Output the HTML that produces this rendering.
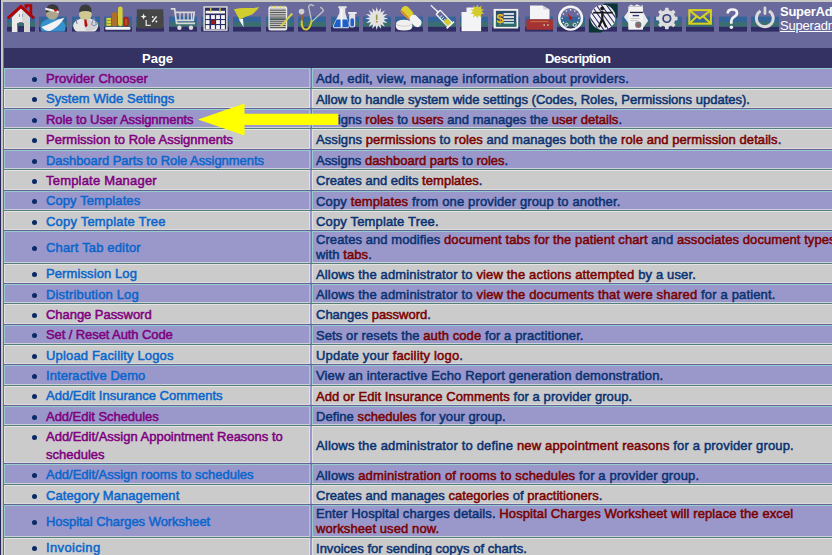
<!DOCTYPE html><html><head><meta charset="utf-8"><style>
*{margin:0;padding:0}
html,body{width:832px;height:555px;overflow:hidden}
body{position:relative;background:#6a699b;font-family:"Liberation Sans",sans-serif;font-size:13px}
.a{position:absolute}
.row{position:absolute;left:4px;width:840px}
.t1{position:absolute;left:46px;white-space:nowrap;line-height:18px;-webkit-text-stroke:0.5px currentColor}
.t2{position:absolute;left:316px;white-space:nowrap;line-height:15px;color:#0a3272;-webkit-text-stroke:0.5px currentColor}
.r{color:#7a0000}
.bul{position:absolute;left:32px;width:5px;height:5px;border-radius:50%;background:#0a2a66}
.tile{position:absolute;top:17px;width:28px;height:15px;background:linear-gradient(#33659b 0,#33659b 5px,#3b6e6f 5px,#3b6e6f 10px,#302d65 10px)}
</style></head><body><div class="a" style="left:0;top:0;width:1px;height:555px;background:#25245a"></div>
<div class="a" style="left:1px;top:0;width:2px;height:555px;background:#c9c9c4"></div>
<div class="a" style="left:1px;top:0;width:831px;height:2px;background:#c9c9c4"></div>
<div class="a" style="left:4px;top:48px;width:828px;height:20px;background:#343163"></div>
<div class="a" style="left:142px;top:51px;color:#fff;font-weight:bold;line-height:15px">Page</div>
<div class="a" style="left:545px;top:51px;color:#fff;font-weight:bold;line-height:15px;letter-spacing:-0.55px">Description</div>
<div class="a" style="left:4px;top:68px;width:828px;height:20px;background:#9a98cb"></div>
<div class="a" style="left:4px;top:68px;width:828px;height:1px;background:#95cccc"></div>
<div class="a" style="left:4px;top:87px;width:828px;height:1px;background:#cfcfd8"></div>
<div class="a" style="left:4px;top:69px;width:1px;height:18px;background:#95cccc"></div>
<div class="a" style="left:309px;top:69px;width:1px;height:18px;background:#95cccc"></div>
<div class="a" style="left:310px;top:68px;width:2px;height:20px;background:#9a98cb"></div>
<div class="a" style="left:311px;top:68px;width:1px;height:20px;background:#5b8a8a"></div>
<div class="a" style="left:312px;top:69px;width:1px;height:18px;background:#95cccc"></div>
<div class="a" style="left:4px;top:88px;width:828px;height:1px;background:#52807f"></div>
<div class="bul" style="top:77.0px"></div>
<div class="t1" style="top:70.0px;color:#800080"><span class="ln" style="letter-spacing:0.040px">Provider Chooser</span></div>
<div class="t2" style="top:71.3px"><span class="ln" style="letter-spacing:0.196px">Add, edit, view, manage information about providers.</span></div>
<div class="a" style="left:4px;top:89px;width:828px;height:19px;background:#cbcbcb"></div>
<div class="a" style="left:4px;top:89px;width:828px;height:1px;background:#e4e4e4"></div>
<div class="a" style="left:4px;top:107px;width:828px;height:1px;background:#dcdcdc"></div>
<div class="a" style="left:4px;top:90px;width:1px;height:17px;background:#e2e2e2"></div>
<div class="a" style="left:309px;top:90px;width:1px;height:17px;background:#e2e2e2"></div>
<div class="a" style="left:310px;top:89px;width:2px;height:19px;background:#9a98cb"></div>
<div class="a" style="left:312px;top:90px;width:1px;height:17px;background:#e2e2e2"></div>
<div class="a" style="left:4px;top:108px;width:828px;height:1px;background:#63639a"></div>
<div class="bul" style="top:97.4px"></div>
<div class="t1" style="top:90.4px;color:#0a66cc"><span class="ln" style="letter-spacing:0.063px">System Wide Settings</span></div>
<div class="t2" style="top:91.7px"><span class="ln" style="letter-spacing:0.006px">Allow to handle system wide settings (Codes, Roles, Permissions updates).</span></div>
<div class="a" style="left:4px;top:109px;width:828px;height:19px;background:#9a98cb"></div>
<div class="a" style="left:4px;top:109px;width:828px;height:1px;background:#95cccc"></div>
<div class="a" style="left:4px;top:127px;width:828px;height:1px;background:#cfcfd8"></div>
<div class="a" style="left:4px;top:110px;width:1px;height:17px;background:#95cccc"></div>
<div class="a" style="left:309px;top:110px;width:1px;height:17px;background:#95cccc"></div>
<div class="a" style="left:310px;top:109px;width:2px;height:19px;background:#9a98cb"></div>
<div class="a" style="left:311px;top:109px;width:1px;height:19px;background:#5b8a8a"></div>
<div class="a" style="left:312px;top:110px;width:1px;height:17px;background:#95cccc"></div>
<div class="a" style="left:4px;top:128px;width:828px;height:1px;background:#52807f"></div>
<div class="bul" style="top:117.8px"></div>
<div class="t1" style="top:110.8px;color:#800080"><span class="ln" style="letter-spacing:-0.087px">Role to User Assignments</span></div>
<div class="t2" style="top:112.1px"><span class="ln" style="letter-spacing:0.020px">Assigns <span class="r">roles</span> to <span class="r">users</span> and manages the <span class="r">user details</span>.</span></div>
<div class="a" style="left:4px;top:129px;width:828px;height:20px;background:#cbcbcb"></div>
<div class="a" style="left:4px;top:129px;width:828px;height:1px;background:#e4e4e4"></div>
<div class="a" style="left:4px;top:148px;width:828px;height:1px;background:#dcdcdc"></div>
<div class="a" style="left:4px;top:130px;width:1px;height:18px;background:#e2e2e2"></div>
<div class="a" style="left:309px;top:130px;width:1px;height:18px;background:#e2e2e2"></div>
<div class="a" style="left:310px;top:129px;width:2px;height:20px;background:#9a98cb"></div>
<div class="a" style="left:312px;top:130px;width:1px;height:18px;background:#e2e2e2"></div>
<div class="a" style="left:4px;top:149px;width:828px;height:1px;background:#63639a"></div>
<div class="bul" style="top:138.1px"></div>
<div class="t1" style="top:131.1px;color:#800080"><span class="ln" style="letter-spacing:0.024px">Permission to Role Assignments</span></div>
<div class="t2" style="top:132.4px"><span class="ln" style="letter-spacing:0.073px">Assigns <span class="r">permissions</span> to <span class="r">roles</span> and manages both the <span class="r">role and permission details</span>.</span></div>
<div class="a" style="left:4px;top:150px;width:828px;height:19px;background:#9a98cb"></div>
<div class="a" style="left:4px;top:150px;width:828px;height:1px;background:#95cccc"></div>
<div class="a" style="left:4px;top:168px;width:828px;height:1px;background:#cfcfd8"></div>
<div class="a" style="left:4px;top:151px;width:1px;height:17px;background:#95cccc"></div>
<div class="a" style="left:309px;top:151px;width:1px;height:17px;background:#95cccc"></div>
<div class="a" style="left:310px;top:150px;width:2px;height:19px;background:#9a98cb"></div>
<div class="a" style="left:311px;top:150px;width:1px;height:19px;background:#5b8a8a"></div>
<div class="a" style="left:312px;top:151px;width:1px;height:17px;background:#95cccc"></div>
<div class="a" style="left:4px;top:169px;width:828px;height:1px;background:#52807f"></div>
<div class="bul" style="top:158.5px"></div>
<div class="t1" style="top:151.5px;color:#0a66cc"><span class="ln" style="letter-spacing:-0.050px">Dashboard Parts to Role Assignments</span></div>
<div class="t2" style="top:152.8px"><span class="ln" style="letter-spacing:-0.025px">Assigns <span class="r">dashboard parts</span> to <span class="r">roles</span>.</span></div>
<div class="a" style="left:4px;top:170px;width:828px;height:20px;background:#cbcbcb"></div>
<div class="a" style="left:4px;top:170px;width:828px;height:1px;background:#e4e4e4"></div>
<div class="a" style="left:4px;top:189px;width:828px;height:1px;background:#dcdcdc"></div>
<div class="a" style="left:4px;top:171px;width:1px;height:18px;background:#e2e2e2"></div>
<div class="a" style="left:309px;top:171px;width:1px;height:18px;background:#e2e2e2"></div>
<div class="a" style="left:310px;top:170px;width:2px;height:20px;background:#9a98cb"></div>
<div class="a" style="left:312px;top:171px;width:1px;height:18px;background:#e2e2e2"></div>
<div class="a" style="left:4px;top:190px;width:828px;height:1px;background:#63639a"></div>
<div class="bul" style="top:178.8px"></div>
<div class="t1" style="top:171.8px;color:#800080"><span class="ln" style="letter-spacing:0.200px">Template Manager</span></div>
<div class="t2" style="top:173.1px"><span class="ln" style="letter-spacing:0.033px">Creates and edits <span class="r">templates</span>.</span></div>
<div class="a" style="left:4px;top:191px;width:828px;height:19px;background:#9a98cb"></div>
<div class="a" style="left:4px;top:191px;width:828px;height:1px;background:#95cccc"></div>
<div class="a" style="left:4px;top:209px;width:828px;height:1px;background:#cfcfd8"></div>
<div class="a" style="left:4px;top:192px;width:1px;height:17px;background:#95cccc"></div>
<div class="a" style="left:309px;top:192px;width:1px;height:17px;background:#95cccc"></div>
<div class="a" style="left:310px;top:191px;width:2px;height:19px;background:#9a98cb"></div>
<div class="a" style="left:311px;top:191px;width:1px;height:19px;background:#5b8a8a"></div>
<div class="a" style="left:312px;top:192px;width:1px;height:17px;background:#95cccc"></div>
<div class="a" style="left:4px;top:210px;width:828px;height:1px;background:#52807f"></div>
<div class="bul" style="top:199.2px"></div>
<div class="t1" style="top:192.2px;color:#0a66cc"><span class="ln" style="letter-spacing:0.092px">Copy Templates</span></div>
<div class="t2" style="top:193.5px"><span class="ln" style="letter-spacing:0.135px">Copy <span class="r">templates</span> from one provider group to another.</span></div>
<div class="a" style="left:4px;top:211px;width:828px;height:19px;background:#cbcbcb"></div>
<div class="a" style="left:4px;top:211px;width:828px;height:1px;background:#e4e4e4"></div>
<div class="a" style="left:4px;top:229px;width:828px;height:1px;background:#dcdcdc"></div>
<div class="a" style="left:4px;top:212px;width:1px;height:17px;background:#e2e2e2"></div>
<div class="a" style="left:309px;top:212px;width:1px;height:17px;background:#e2e2e2"></div>
<div class="a" style="left:310px;top:211px;width:2px;height:19px;background:#9a98cb"></div>
<div class="a" style="left:312px;top:212px;width:1px;height:17px;background:#e2e2e2"></div>
<div class="a" style="left:4px;top:230px;width:828px;height:1px;background:#63639a"></div>
<div class="bul" style="top:219.6px"></div>
<div class="t1" style="top:212.6px;color:#0a66cc"><span class="ln" style="letter-spacing:0.194px">Copy Template Tree</span></div>
<div class="t2" style="top:213.9px"><span class="ln" style="letter-spacing:0.156px">Copy Template Tree.</span></div>
<div class="a" style="left:4px;top:231px;width:828px;height:32px;background:#9a98cb"></div>
<div class="a" style="left:4px;top:231px;width:828px;height:1px;background:#95cccc"></div>
<div class="a" style="left:4px;top:262px;width:828px;height:1px;background:#cfcfd8"></div>
<div class="a" style="left:4px;top:232px;width:1px;height:30px;background:#95cccc"></div>
<div class="a" style="left:309px;top:232px;width:1px;height:30px;background:#95cccc"></div>
<div class="a" style="left:310px;top:231px;width:2px;height:32px;background:#9a98cb"></div>
<div class="a" style="left:311px;top:231px;width:1px;height:32px;background:#5b8a8a"></div>
<div class="a" style="left:312px;top:232px;width:1px;height:30px;background:#95cccc"></div>
<div class="a" style="left:4px;top:263px;width:828px;height:1px;background:#52807f"></div>
<div class="bul" style="top:245.9px"></div>
<div class="t1" style="top:238.9px;color:#0a66cc"><span class="ln" style="letter-spacing:0.160px">Chart Tab editor</span></div>
<div class="t2" style="top:232.2px"><span class="ln" style="letter-spacing:0.076px">Creates and modifies <span class="r">document tabs for the patient chart</span> and <span class="r">associates document types</span></span><br><span class="ln" style="letter-spacing:0.100px">with <span class="r">tabs</span>.</span></div>
<div class="a" style="left:4px;top:264px;width:828px;height:19px;background:#cbcbcb"></div>
<div class="a" style="left:4px;top:264px;width:828px;height:1px;background:#e4e4e4"></div>
<div class="a" style="left:4px;top:282px;width:828px;height:1px;background:#dcdcdc"></div>
<div class="a" style="left:4px;top:265px;width:1px;height:17px;background:#e2e2e2"></div>
<div class="a" style="left:309px;top:265px;width:1px;height:17px;background:#e2e2e2"></div>
<div class="a" style="left:310px;top:264px;width:2px;height:19px;background:#9a98cb"></div>
<div class="a" style="left:312px;top:265px;width:1px;height:17px;background:#e2e2e2"></div>
<div class="a" style="left:4px;top:283px;width:828px;height:1px;background:#63639a"></div>
<div class="bul" style="top:272.3px"></div>
<div class="t1" style="top:265.3px;color:#0a66cc"><span class="ln" style="letter-spacing:0.100px">Permission Log</span></div>
<div class="t2" style="top:266.6px"><span class="ln" style="letter-spacing:0.155px">Allows the administrator to <span class="r">view the actions attempted</span> by a user.</span></div>
<div class="a" style="left:4px;top:284px;width:828px;height:19px;background:#9a98cb"></div>
<div class="a" style="left:4px;top:284px;width:828px;height:1px;background:#95cccc"></div>
<div class="a" style="left:4px;top:302px;width:828px;height:1px;background:#cfcfd8"></div>
<div class="a" style="left:4px;top:285px;width:1px;height:17px;background:#95cccc"></div>
<div class="a" style="left:309px;top:285px;width:1px;height:17px;background:#95cccc"></div>
<div class="a" style="left:310px;top:284px;width:2px;height:19px;background:#9a98cb"></div>
<div class="a" style="left:311px;top:284px;width:1px;height:19px;background:#5b8a8a"></div>
<div class="a" style="left:312px;top:285px;width:1px;height:17px;background:#95cccc"></div>
<div class="a" style="left:4px;top:303px;width:828px;height:1px;background:#52807f"></div>
<div class="bul" style="top:292.6px"></div>
<div class="t1" style="top:285.6px;color:#0a66cc"><span class="ln" style="letter-spacing:0.160px">Distribution Log</span></div>
<div class="t2" style="top:286.9px"><span class="ln" style="letter-spacing:0.157px">Allows the administrator to <span class="r">view the documents that were shared</span> for a patient.</span></div>
<div class="a" style="left:4px;top:304px;width:828px;height:20px;background:#cbcbcb"></div>
<div class="a" style="left:4px;top:304px;width:828px;height:1px;background:#e4e4e4"></div>
<div class="a" style="left:4px;top:323px;width:828px;height:1px;background:#dcdcdc"></div>
<div class="a" style="left:4px;top:305px;width:1px;height:18px;background:#e2e2e2"></div>
<div class="a" style="left:309px;top:305px;width:1px;height:18px;background:#e2e2e2"></div>
<div class="a" style="left:310px;top:304px;width:2px;height:20px;background:#9a98cb"></div>
<div class="a" style="left:312px;top:305px;width:1px;height:18px;background:#e2e2e2"></div>
<div class="a" style="left:4px;top:324px;width:828px;height:1px;background:#63639a"></div>
<div class="bul" style="top:313.0px"></div>
<div class="t1" style="top:306.0px;color:#800080"><span class="ln" style="letter-spacing:-0.043px">Change Password</span></div>
<div class="t2" style="top:307.3px"><span class="ln" style="letter-spacing:0.000px">Changes <span class="r">password</span>.</span></div>
<div class="a" style="left:4px;top:325px;width:828px;height:19px;background:#9a98cb"></div>
<div class="a" style="left:4px;top:325px;width:828px;height:1px;background:#95cccc"></div>
<div class="a" style="left:4px;top:343px;width:828px;height:1px;background:#cfcfd8"></div>
<div class="a" style="left:4px;top:326px;width:1px;height:17px;background:#95cccc"></div>
<div class="a" style="left:309px;top:326px;width:1px;height:17px;background:#95cccc"></div>
<div class="a" style="left:310px;top:325px;width:2px;height:19px;background:#9a98cb"></div>
<div class="a" style="left:311px;top:325px;width:1px;height:19px;background:#5b8a8a"></div>
<div class="a" style="left:312px;top:326px;width:1px;height:17px;background:#95cccc"></div>
<div class="a" style="left:4px;top:344px;width:828px;height:1px;background:#52807f"></div>
<div class="bul" style="top:333.4px"></div>
<div class="t1" style="top:326.4px;color:#800080"><span class="ln" style="letter-spacing:-0.090px">Set / Reset Auth Code</span></div>
<div class="t2" style="top:327.7px"><span class="ln" style="letter-spacing:0.094px">Sets or resets the <span class="r">auth code</span> for a practitioner.</span></div>
<div class="a" style="left:4px;top:345px;width:828px;height:19px;background:#cbcbcb"></div>
<div class="a" style="left:4px;top:345px;width:828px;height:1px;background:#e4e4e4"></div>
<div class="a" style="left:4px;top:363px;width:828px;height:1px;background:#dcdcdc"></div>
<div class="a" style="left:4px;top:346px;width:1px;height:17px;background:#e2e2e2"></div>
<div class="a" style="left:309px;top:346px;width:1px;height:17px;background:#e2e2e2"></div>
<div class="a" style="left:310px;top:345px;width:2px;height:19px;background:#9a98cb"></div>
<div class="a" style="left:312px;top:346px;width:1px;height:17px;background:#e2e2e2"></div>
<div class="a" style="left:4px;top:364px;width:828px;height:1px;background:#63639a"></div>
<div class="bul" style="top:353.7px"></div>
<div class="t1" style="top:346.7px;color:#0a66cc"><span class="ln" style="letter-spacing:0.160px">Upload Facility Logos</span></div>
<div class="t2" style="top:348.0px"><span class="ln" style="letter-spacing:0.184px">Update your <span class="r">facility logo</span>.</span></div>
<div class="a" style="left:4px;top:365px;width:828px;height:20px;background:#9a98cb"></div>
<div class="a" style="left:4px;top:365px;width:828px;height:1px;background:#95cccc"></div>
<div class="a" style="left:4px;top:384px;width:828px;height:1px;background:#cfcfd8"></div>
<div class="a" style="left:4px;top:366px;width:1px;height:18px;background:#95cccc"></div>
<div class="a" style="left:309px;top:366px;width:1px;height:18px;background:#95cccc"></div>
<div class="a" style="left:310px;top:365px;width:2px;height:20px;background:#9a98cb"></div>
<div class="a" style="left:311px;top:365px;width:1px;height:20px;background:#5b8a8a"></div>
<div class="a" style="left:312px;top:366px;width:1px;height:18px;background:#95cccc"></div>
<div class="a" style="left:4px;top:385px;width:828px;height:1px;background:#52807f"></div>
<div class="bul" style="top:374.1px"></div>
<div class="t1" style="top:367.1px;color:#0a66cc"><span class="ln" style="letter-spacing:0.067px">Interactive Demo</span></div>
<div class="t2" style="top:368.4px"><span class="ln" style="letter-spacing:0.138px">View an interactive Echo Report generation demonstration.</span></div>
<div class="a" style="left:4px;top:386px;width:828px;height:19px;background:#cbcbcb"></div>
<div class="a" style="left:4px;top:386px;width:828px;height:1px;background:#e4e4e4"></div>
<div class="a" style="left:4px;top:404px;width:828px;height:1px;background:#dcdcdc"></div>
<div class="a" style="left:4px;top:387px;width:1px;height:17px;background:#e2e2e2"></div>
<div class="a" style="left:309px;top:387px;width:1px;height:17px;background:#e2e2e2"></div>
<div class="a" style="left:310px;top:386px;width:2px;height:19px;background:#9a98cb"></div>
<div class="a" style="left:312px;top:387px;width:1px;height:17px;background:#e2e2e2"></div>
<div class="a" style="left:4px;top:405px;width:828px;height:1px;background:#63639a"></div>
<div class="bul" style="top:394.4px"></div>
<div class="t1" style="top:387.4px;color:#0a66cc"><span class="ln" style="letter-spacing:0.008px">Add/Edit Insurance Comments</span></div>
<div class="t2" style="top:388.7px"><span class="ln" style="letter-spacing:0.078px"><span class="r">Add or Edit Insurance Comments</span> for a provider group.</span></div>
<div class="a" style="left:4px;top:406px;width:828px;height:19px;background:#9a98cb"></div>
<div class="a" style="left:4px;top:406px;width:828px;height:1px;background:#95cccc"></div>
<div class="a" style="left:4px;top:424px;width:828px;height:1px;background:#cfcfd8"></div>
<div class="a" style="left:4px;top:407px;width:1px;height:17px;background:#95cccc"></div>
<div class="a" style="left:309px;top:407px;width:1px;height:17px;background:#95cccc"></div>
<div class="a" style="left:310px;top:406px;width:2px;height:19px;background:#9a98cb"></div>
<div class="a" style="left:311px;top:406px;width:1px;height:19px;background:#5b8a8a"></div>
<div class="a" style="left:312px;top:407px;width:1px;height:17px;background:#95cccc"></div>
<div class="a" style="left:4px;top:425px;width:828px;height:1px;background:#52807f"></div>
<div class="bul" style="top:414.8px"></div>
<div class="t1" style="top:407.8px;color:#800080"><span class="ln" style="letter-spacing:-0.041px">Add/Edit Schedules</span></div>
<div class="t2" style="top:409.1px"><span class="ln" style="letter-spacing:0.055px">Define <span class="r">schedules</span> for your group.</span></div>
<div class="a" style="left:4px;top:426px;width:828px;height:37px;background:#cbcbcb"></div>
<div class="a" style="left:4px;top:426px;width:828px;height:1px;background:#e4e4e4"></div>
<div class="a" style="left:4px;top:462px;width:828px;height:1px;background:#dcdcdc"></div>
<div class="a" style="left:4px;top:427px;width:1px;height:35px;background:#e2e2e2"></div>
<div class="a" style="left:309px;top:427px;width:1px;height:35px;background:#e2e2e2"></div>
<div class="a" style="left:310px;top:426px;width:2px;height:37px;background:#9a98cb"></div>
<div class="a" style="left:312px;top:427px;width:1px;height:35px;background:#e2e2e2"></div>
<div class="a" style="left:4px;top:463px;width:828px;height:1px;background:#63639a"></div>
<div class="bul" style="top:434.6px"></div>
<div class="t1" style="top:427.6px;color:#800080"><span class="ln" style="letter-spacing:-0.008px">Add/Edit/Assign Appointment Reasons to</span><br><span class="ln" style="letter-spacing:0.000px">schedules</span></div>
<div class="t2" style="top:437.8px"><span class="ln" style="letter-spacing:0.165px">Allows the administrator to define <span class="r">new appointment reasons</span> for a provider group.</span></div>
<div class="a" style="left:4px;top:464px;width:828px;height:20px;background:#9a98cb"></div>
<div class="a" style="left:4px;top:464px;width:828px;height:1px;background:#95cccc"></div>
<div class="a" style="left:4px;top:483px;width:828px;height:1px;background:#cfcfd8"></div>
<div class="a" style="left:4px;top:465px;width:1px;height:18px;background:#95cccc"></div>
<div class="a" style="left:309px;top:465px;width:1px;height:18px;background:#95cccc"></div>
<div class="a" style="left:310px;top:464px;width:2px;height:20px;background:#9a98cb"></div>
<div class="a" style="left:311px;top:464px;width:1px;height:20px;background:#5b8a8a"></div>
<div class="a" style="left:312px;top:465px;width:1px;height:18px;background:#95cccc"></div>
<div class="a" style="left:4px;top:484px;width:828px;height:1px;background:#52807f"></div>
<div class="bul" style="top:473.2px"></div>
<div class="t1" style="top:466.2px;color:#0a66cc"><span class="ln" style="letter-spacing:-0.018px">Add/Edit/Assign rooms to schedules</span></div>
<div class="t2" style="top:467.5px"><span class="ln" style="letter-spacing:0.147px">Allows <span class="r">administration of rooms to schedules</span> for a provider group.</span></div>
<div class="a" style="left:4px;top:485px;width:828px;height:19px;background:#cbcbcb"></div>
<div class="a" style="left:4px;top:485px;width:828px;height:1px;background:#e4e4e4"></div>
<div class="a" style="left:4px;top:503px;width:828px;height:1px;background:#dcdcdc"></div>
<div class="a" style="left:4px;top:486px;width:1px;height:17px;background:#e2e2e2"></div>
<div class="a" style="left:309px;top:486px;width:1px;height:17px;background:#e2e2e2"></div>
<div class="a" style="left:310px;top:485px;width:2px;height:19px;background:#9a98cb"></div>
<div class="a" style="left:312px;top:486px;width:1px;height:17px;background:#e2e2e2"></div>
<div class="a" style="left:4px;top:504px;width:828px;height:1px;background:#63639a"></div>
<div class="bul" style="top:493.5px"></div>
<div class="t1" style="top:486.5px;color:#0a66cc"><span class="ln" style="letter-spacing:0.056px">Category Management</span></div>
<div class="t2" style="top:487.8px"><span class="ln" style="letter-spacing:0.049px">Creates and manages <span class="r">categories</span> of <span class="r">practitioners</span>.</span></div>
<div class="a" style="left:4px;top:505px;width:828px;height:32px;background:#9a98cb"></div>
<div class="a" style="left:4px;top:505px;width:828px;height:1px;background:#95cccc"></div>
<div class="a" style="left:4px;top:536px;width:828px;height:1px;background:#cfcfd8"></div>
<div class="a" style="left:4px;top:506px;width:1px;height:30px;background:#95cccc"></div>
<div class="a" style="left:309px;top:506px;width:1px;height:30px;background:#95cccc"></div>
<div class="a" style="left:310px;top:505px;width:2px;height:32px;background:#9a98cb"></div>
<div class="a" style="left:311px;top:505px;width:1px;height:32px;background:#5b8a8a"></div>
<div class="a" style="left:312px;top:506px;width:1px;height:30px;background:#95cccc"></div>
<div class="a" style="left:4px;top:537px;width:828px;height:1px;background:#52807f"></div>
<div class="bul" style="top:519.9px"></div>
<div class="t1" style="top:512.9px;color:#0a66cc"><span class="ln" style="letter-spacing:-0.040px">Hospital Charges Worksheet</span></div>
<div class="t2" style="top:506.2px"><span class="ln" style="letter-spacing:0.106px">Enter Hospital charges details. <span class="r">Hospital Charges Worksheet will replace the excel</span></span><br><span class="ln" style="letter-spacing:0.094px"><span class="r">worksheet used now.</span></span></div>
<div class="a" style="left:4px;top:538px;width:828px;height:19px;background:#cbcbcb"></div>
<div class="a" style="left:4px;top:538px;width:828px;height:1px;background:#e4e4e4"></div>
<div class="a" style="left:4px;top:556px;width:828px;height:1px;background:#dcdcdc"></div>
<div class="a" style="left:4px;top:539px;width:1px;height:17px;background:#e2e2e2"></div>
<div class="a" style="left:309px;top:539px;width:1px;height:17px;background:#e2e2e2"></div>
<div class="a" style="left:310px;top:538px;width:2px;height:19px;background:#9a98cb"></div>
<div class="a" style="left:312px;top:539px;width:1px;height:17px;background:#e2e2e2"></div>
<div class="a" style="left:4px;top:557px;width:828px;height:1px;background:#63639a"></div>
<div class="bul" style="top:546.2px"></div>
<div class="t1" style="top:539.2px;color:#0a66cc"><span class="ln" style="letter-spacing:0.350px">Invoicing</span></div>
<div class="t2" style="top:540.5px"><span class="ln" style="letter-spacing:0.014px">Invoices for sending copys of charts.</span></div>
<svg class="a" style="left:7.00px;top:0;overflow:visible" width="30" height="34" viewBox="0 0 30 34"><rect x="0" y="16.6" width="28" height="5.4" fill="#33659b"/><rect x="0" y="22" width="28" height="4.8" fill="#3b6e6f"/><rect x="0" y="26.8" width="28" height="4.8" fill="#302d65"/>
<polygon fill="#ebebeb" points="4.9,17.6 13.9,8.4 22.9,17.6 22.9,32 4.9,32"/>
<polygon fill="#d6d6d6" points="13.9,8.4 22.9,17.6 22.9,32 15,32 15,10"/>
<path d="M10.4,32 V23.5 Q13.7,21 17,23.5 V32 Z" fill="#2f2e66"/>
<rect x="10.4" y="23" width="6.6" height="3" fill="#3b6e70"/>
<polyline fill="none" stroke="#b30000" stroke-width="2.8" points="0.8,18.3 13.9,6.4 27,18.3"/>
<polygon fill="#b30000" points="17.5,4.3 25.2,4.3 25.2,15 22.6,12.6 22.6,6.8 20.5,6.8 20.2,9 17.6,7.5"/>
<rect x="12" y="14" width="1" height="3" fill="#9a9aa0"/><rect x="15" y="14" width="1" height="3" fill="#9aa0c0"/>
</svg>
<svg class="a" style="left:39.35px;top:0;overflow:visible" width="30" height="34" viewBox="0 0 30 34"><rect x="0" y="16.6" width="28" height="5.4" fill="#33659b"/><rect x="0" y="22" width="28" height="4.8" fill="#3b6e6f"/><rect x="0" y="26.8" width="28" height="4.8" fill="#302d65"/>
<clipPath id="c1"><rect x="0" y="0" width="28" height="31.6"/></clipPath>
<g clip-path="url(#c1)">
<ellipse cx="14" cy="27.5" rx="12.6" ry="9.5" fill="#3592cf"/>
<path d="M2.5,27 Q6,31.5 11,31 Q20,27 25.5,17.8 Q20,18.5 14,22 Q7,25.5 2.5,27 Z" fill="#f2f2f2"/>
</g>
<circle cx="13.3" cy="13.3" r="6.4" fill="#aaa58b"/>
<path d="M6.9,13 Q6.5,4.3 13.5,4.3 Q20.2,4.6 19.8,11 Q14,8.5 6.9,13 Z" fill="#383838"/>
<path d="M6.2,7.8 Q12,8.5 19.8,11.2 L19.6,13 Q12,10.8 6.6,10 Z" fill="#f0f0f0"/>
<circle cx="16.5" cy="10.3" r="1.5" fill="#b51c10"/>
</svg>
<svg class="a" style="left:71.70px;top:0;overflow:visible" width="30" height="34" viewBox="0 0 30 34"><rect x="0" y="16.6" width="28" height="5.4" fill="#33659b"/><rect x="0" y="22" width="28" height="4.8" fill="#3b6e6f"/><rect x="0" y="26.8" width="28" height="4.8" fill="#302d65"/>
<clipPath id="c2"><rect x="0" y="0" width="28" height="31.4"/></clipPath>
<g clip-path="url(#c2)">
<ellipse cx="13.6" cy="26" rx="12.4" ry="8" fill="#e6e6e6"/>
<path d="M13.6,18 L26,24 Q26,31 13.6,31.5 Z" fill="#d2d2d2"/>
</g>
<ellipse cx="13.4" cy="14.6" rx="6.4" ry="5.6" fill="#cfc893"/>
<path d="M7.2,12.2 Q7,4.6 13.4,4.6 Q19.8,4.6 19.6,12.2 Q13.4,9.6 7.2,12.2 Z" fill="#3a3a3a"/>
<polygon fill="#b01010" points="12.2,19.6 14.4,19.6 15.6,25.5 13.8,27.4 12.6,25.5"/>
<path d="M4.6,19 Q3.6,22 5.4,23.6" stroke="#7a7aa0" stroke-width="1.2" fill="none"/>
<path d="M22,17.5 L19.5,24.5 Q21.5,27 24.5,24.5 Z" stroke="#8080b0" stroke-width="1" fill="none"/>
</svg>
<svg class="a" style="left:104.05px;top:0;overflow:visible" width="30" height="34" viewBox="0 0 30 34"><rect x="0" y="16.6" width="28" height="5.4" fill="#33659b"/><rect x="0" y="22" width="28" height="4.8" fill="#3b6e6f"/><rect x="0" y="26.8" width="28" height="4.8" fill="#302d65"/>
<rect x="2.4" y="17.8" width="4.7" height="8" fill="#dccf36"/>
<rect x="2.4" y="20" width="4.7" height="0.8" fill="#8a8a40"/><rect x="2.4" y="23" width="4.7" height="0.8" fill="#8a8a40"/>
<rect x="7.8" y="12" width="5.4" height="14.6" rx="2.6" fill="#ad6f2c"/>
<rect x="14" y="6.6" width="4.6" height="19.6" rx="2.2" fill="#d6cd3a"/>
<rect x="19.6" y="16.8" width="5.1" height="9.8" rx="2.5" fill="#b41616"/>
<rect x="20.8" y="18.5" width="2.7" height="7" rx="1.3" fill="#a8541c"/>
<rect x="1.2" y="27" width="25.4" height="2.7" rx="1.3" fill="#f0f2f4"/>
</svg>
<svg class="a" style="left:136.40px;top:0;overflow:visible" width="30" height="34" viewBox="0 0 30 34"><rect x="0" y="16.6" width="28" height="5.4" fill="#33659b"/><rect x="0" y="22" width="28" height="4.8" fill="#3b6e6f"/><rect x="0" y="26.8" width="28" height="4.8" fill="#302d65"/>
<rect x="0.8" y="9.3" width="26.5" height="19.2" fill="#474646"/>
<polygon fill="#f4f4f4" points="7.6,13.6 8.4,15.8 10.6,16.6 8.4,17.4 7.6,19.6 6.8,17.4 4.6,16.6 6.8,15.8"/>
<path d="M10.2,20 V25.3 H14.8" stroke="#e0e0e0" stroke-width="1.3" fill="none"/>
<path d="M16.2,22 L20.6,16.4" stroke="#f0f0f0" stroke-width="1.5"/>
<circle cx="16.8" cy="17" r="0.9" fill="#f0f0f0"/><circle cx="20.4" cy="21.5" r="1" fill="#f0f0f0"/>
</svg>
<svg class="a" style="left:168.75px;top:0;overflow:visible" width="30" height="34" viewBox="0 0 30 34"><rect x="0" y="16.6" width="28" height="5.4" fill="#33659b"/><rect x="0" y="22" width="28" height="4.8" fill="#3b6e6f"/><rect x="0" y="26.8" width="28" height="4.8" fill="#302d65"/>
<g stroke="#d9d9d9" stroke-width="1.7" fill="none">
<path d="M1.8,8.9 H5.6 L7.6,23.4 H26"/>
<path d="M6.6,12.4 H25.2 L24.2,20.4 H7.6"/>
<path d="M11,13 V20 M15,13 V20 M19,13 V20 M22.5,13 V20" stroke-width="1.2"/>
</g>
<circle cx="10.4" cy="27.8" r="2.2" fill="#dcdcdc"/><circle cx="22" cy="27.8" r="2.2" fill="#dcdcdc"/>
</svg>
<svg class="a" style="left:201.10px;top:0;overflow:visible" width="30" height="34" viewBox="0 0 30 34"><rect x="0" y="16.6" width="28" height="5.4" fill="#33659b"/><rect x="0" y="22" width="28" height="4.8" fill="#3b6e6f"/><rect x="0" y="26.8" width="28" height="4.8" fill="#302d65"/><rect x="2.4" y="6.2" width="24.2" height="24.6" fill="#dadada"/>
<rect x="3.9" y="7.7" width="21.2" height="21.6" fill="#2a2d64"/>
<rect x="4.7" y="10.8" width="19.3" height="2.7" fill="#f4f4f4"/>
<rect x="9.1" y="8" width="1.3" height="4" fill="#d8c830"/>
<rect x="18.3" y="8" width="1.3" height="4" fill="#d8c830"/>
<rect x="4.7" y="15.1" width="3.8" height="3.9" fill="#f4f4f4"/>
<rect x="10.1" y="15.1" width="3.8" height="3.9" fill="#f4f4f4"/>
<rect x="15.1" y="15.1" width="3.8" height="3.9" fill="#f4f4f4"/>
<rect x="20.1" y="15.1" width="3.8" height="3.9" fill="#f4f4f4"/>
<rect x="4.7" y="20.1" width="3.8" height="3.9" fill="#f4f4f4"/>
<rect x="10.1" y="20.1" width="3.8" height="3.9" fill="#a01818"/>
<rect x="15.1" y="20.1" width="3.8" height="3.9" fill="#f4f4f4"/>
<rect x="20.1" y="20.1" width="3.8" height="3.9" fill="#f4f4f4"/>
<rect x="4.7" y="25.1" width="3.8" height="3.9" fill="#f4f4f4"/>
<rect x="10.1" y="25.1" width="3.8" height="3.9" fill="#f4f4f4"/>
<rect x="15.1" y="25.1" width="3.8" height="3.9" fill="#f4f4f4"/>
<rect x="20.1" y="25.1" width="3.8" height="3.9" fill="#f4f4f4"/></svg>
<svg class="a" style="left:233.45px;top:0;overflow:visible" width="30" height="34" viewBox="0 0 30 34"><rect x="0" y="16.6" width="28" height="5.4" fill="#33659b"/><rect x="0" y="22" width="28" height="4.8" fill="#3b6e6f"/><rect x="0" y="26.8" width="28" height="4.8" fill="#302d65"/>
<path d="M0.9,9.3 Q8,7.5 14,8 Q20,8.2 26.3,7.2 Q22,12.5 18.6,14.7 Q12,16.5 6.5,19.8 Z" fill="#d2cd2e"/>
<polygon fill="#f4f4f4" points="5.9,19.6 10,18.8 10.6,27.2"/>
</svg>
<svg class="a" style="left:265.80px;top:0;overflow:visible" width="30" height="34" viewBox="0 0 30 34"><rect x="0" y="16.6" width="28" height="5.4" fill="#33659b"/><rect x="0" y="22" width="28" height="4.8" fill="#3b6e6f"/><rect x="0" y="26.8" width="28" height="4.8" fill="#302d65"/><rect x="2.4" y="6.2" width="18.8" height="24.3" rx="2" fill="#e8e8e8"/>
<rect x="3.8" y="8.2" width="16" height="20.8" fill="#c4c4c4"/>
<rect x="3.8" y="9.7" width="16" height="1" fill="#5a5a5a"/>
<rect x="3.8" y="12" width="16" height="1" fill="#5a5a5a"/>
<rect x="3.8" y="14.3" width="16" height="1" fill="#5a5a5a"/>
<rect x="3.8" y="16.6" width="16" height="1" fill="#5a5a5a"/>
<rect x="3.8" y="20.8" width="16" height="1" fill="#5a5a5a"/>
<rect x="3.8" y="22.8" width="16" height="1" fill="#5a5a5a"/>
<rect x="3.8" y="25" width="16" height="1" fill="#5a5a5a"/>
<rect x="3.8" y="27" width="16" height="1" fill="#5a5a5a"/>
<rect x="3.8" y="18.5" width="16" height="1.2" fill="#103030"/>
<path d="M5,6.6 H19" stroke="#d8d030" stroke-width="1.6" stroke-dasharray="1.4,1.6"/>
<path d="M14.7,26.6 L26.2,13.5" stroke="#d8d040" stroke-width="2"/></svg>
<svg class="a" style="left:298.15px;top:0;overflow:visible" width="30" height="34" viewBox="0 0 30 34"><rect x="0" y="16.6" width="28" height="5.4" fill="#33659b"/><rect x="0" y="22" width="28" height="4.8" fill="#3b6e6f"/><rect x="0" y="26.8" width="28" height="4.8" fill="#302d65"/>
<g fill="none" stroke="#c4c4c4" stroke-width="1.3">
<path d="M13.3,19.7 L10.6,6.6 Q11.5,4.6 13.3,4.7 L16,5.8"/>
<path d="M14,21.6 L25.3,11 Q25,8 22.1,7.4"/>
</g>
<path d="M4.2,15 L3.8,20.5" stroke="#a0602a" stroke-width="2.2"/>
<path d="M3.8,20.5 C3,27 5.5,29.8 8.3,29.6 C11.3,29.3 13.4,24 13.6,19.7" stroke="#d8c830" stroke-width="2" fill="none"/>
<circle cx="3.6" cy="11.6" r="2.8" fill="#cfcfcf"/>
</svg>
<svg class="a" style="left:330.50px;top:0;overflow:visible" width="30" height="34" viewBox="0 0 30 34"><rect x="0" y="16.6" width="28" height="5.4" fill="#33659b"/><rect x="0" y="22" width="28" height="4.8" fill="#3b6e6f"/><rect x="0" y="26.8" width="28" height="4.8" fill="#302d65"/>
<polygon fill="#e4e4ea" points="7.3,6.2 15.6,6.2 15.6,7.9 14.3,8.6 14.3,13 18.4,25.2 17.6,28.2 2.6,28.2 1.9,26 8.4,13 8.4,8.6 7.3,7.9"/>
<polygon fill="#1f5fcc" points="5.6,19.6 16.4,19.6 17.9,25.6 17.2,27.3 3,27.3 2.7,26"/>
<rect x="9.6" y="8.5" width="1.8" height="18.5" fill="#f8f8f8"/>
<rect x="17.2" y="12" width="8.4" height="2" fill="#ececf0"/>
<rect x="18.2" y="13" width="6" height="14.4" rx="2.5" fill="#e4e4ea"/>
<rect x="19.4" y="18.2" width="3.6" height="8.4" rx="1.6" fill="#2060cc"/>
</svg>
<svg class="a" style="left:362.85px;top:0;overflow:visible" width="30" height="34" viewBox="0 0 30 34"><rect x="0" y="16.6" width="28" height="5.4" fill="#33659b"/><rect x="0" y="22" width="28" height="4.8" fill="#3b6e6f"/><rect x="0" y="26.8" width="28" height="4.8" fill="#302d65"/>
<polygon fill="#e8e8e8" points="13.75,7.00 15.08,11.83 18.15,7.88 17.53,12.85 21.88,10.37 19.40,14.72 24.37,14.10 20.42,17.17 25.25,18.50 20.42,19.83 24.37,22.90 19.40,22.28 21.88,26.63 17.53,24.15 18.15,29.12 15.08,25.17 13.75,30.00 12.42,25.17 9.35,29.12 9.97,24.15 5.62,26.63 8.10,22.28 3.13,22.90 7.08,19.83 2.25,18.50 7.08,17.17 3.13,14.10 8.10,14.72 5.62,10.37 9.97,12.85 9.35,7.88 12.42,11.83"/>
<circle cx="13.75" cy="18.5" r="7" fill="#e2e2e2"/>
<rect x="12.9" y="14.6" width="1.6" height="5.5" fill="#9c9c3a"/>
<rect x="12.9" y="21" width="1.6" height="1.5" fill="#b87830"/>
</svg>
<svg class="a" style="left:395.20px;top:0;overflow:visible" width="30" height="34" viewBox="0 0 30 34"><rect x="0" y="16.6" width="28" height="5.4" fill="#33659b"/><rect x="0" y="22" width="28" height="4.8" fill="#3b6e6f"/><rect x="0" y="26.8" width="28" height="4.8" fill="#302d65"/>
<g transform="rotate(46 16.4 16.6)">
<rect x="3.6" y="12.4" width="13.4" height="8.6" rx="4" fill="#dcd030"/>
<rect x="5" y="19" width="11.5" height="2" fill="#d88a30"/>
<rect x="15.6" y="12.4" width="13.6" height="8.6" rx="4.2" fill="#f2f2f2"/>
</g>
<path d="M1,24 Q1,20 9,19.8 Q17,20 17.2,24 V27 Q17,30.5 9,30.5 Q1,30.5 1,27 Z" fill="#f0f0f0"/>
<path d="M1.2,24.5 Q9,28 17,24.5" stroke="#c8c8c8" stroke-width="0.8" fill="none"/>
</svg>
<svg class="a" style="left:427.55px;top:0;overflow:visible" width="30" height="34" viewBox="0 0 30 34"><rect x="0" y="16.6" width="28" height="5.4" fill="#33659b"/><rect x="0" y="22" width="28" height="4.8" fill="#3b6e6f"/><rect x="0" y="26.8" width="28" height="4.8" fill="#302d65"/>
<path d="M2.8,5.2 L9.8,11.8" stroke="#f2f2f2" stroke-width="1.2"/>
<g transform="rotate(-43.3 15.95 18.35)">
<rect x="14.9" y="8.2" width="2.1" height="2.2" fill="#f2f2f2"/>
<rect x="13.05" y="10" width="5.8" height="17" rx="0.8" fill="none" stroke="#f2f2f2" stroke-width="1.4"/>
<rect x="13.6" y="20.5" width="4.7" height="6" fill="#d6cc2c"/>
<rect x="11" y="26.6" width="10" height="1.8" fill="#f2f2f2"/>
<path d="M13.6,15 H16.5 M13.6,17.4 H16.5 M13.6,19.8 H16.5" stroke="#f2f2f2" stroke-width="0.9"/>
</g>
</svg>
<svg class="a" style="left:459.90px;top:0;overflow:visible" width="30" height="34" viewBox="0 0 30 34"><rect x="0" y="16.6" width="28" height="5.4" fill="#33659b"/><rect x="0" y="22" width="28" height="4.8" fill="#3b6e6f"/><rect x="0" y="26.8" width="28" height="4.8" fill="#302d65"/>
<polygon fill="#f4f4f6" points="1.5,12 6.5,12 6.5,7.4 21.1,7.4 21.1,31.2 1.5,31.2"/>
<polygon fill="#d4cc2e" points="17.30,4.40 18.60,7.61 21.53,5.78 20.70,9.13 24.15,9.38 21.50,11.60 24.15,13.82 20.70,14.07 21.53,17.42 18.60,15.59 17.30,18.80 16.00,15.59 13.07,17.42 13.90,14.07 10.45,13.82 13.10,11.60 10.45,9.38 13.90,9.13 13.07,5.78 16.00,7.61"/>
</svg>
<svg class="a" style="left:492.25px;top:0;overflow:visible" width="30" height="34" viewBox="0 0 30 34"><rect x="0" y="16.6" width="28" height="5.4" fill="#33659b"/><rect x="0" y="22" width="28" height="4.8" fill="#3b6e6f"/><rect x="0" y="26.8" width="28" height="4.8" fill="#302d65"/>
<rect x="1.6" y="8.9" width="24.6" height="19.6" fill="#f2f2ea"/>
<rect x="3.9" y="10.8" width="20.4" height="15.8" fill="#2c4a6e"/>
<rect x="3.9" y="22" width="20.4" height="4.6" fill="#2f6a6a"/>
<text x="7.9" y="23.2" font-family="Liberation Sans" font-weight="bold" font-size="13.5" text-anchor="middle" fill="#e8c020">$</text>
<rect x="11.6" y="13.1" width="10.4" height="1.7" fill="#e8f0f0"/>
<rect x="11.6" y="16.2" width="10.4" height="1.7" fill="#f0f0f0"/>
<rect x="11.6" y="19.3" width="10.4" height="1.7" fill="#d8d8d0"/>
<rect x="11.6" y="22" width="10.4" height="1.7" fill="#b8e0e0"/>
</svg>
<svg class="a" style="left:524.60px;top:0;overflow:visible" width="30" height="34" viewBox="0 0 30 34"><rect x="0" y="16.6" width="28" height="5.4" fill="#33659b"/><rect x="0" y="22" width="28" height="4.8" fill="#3b6e6f"/><rect x="0" y="26.8" width="28" height="4.8" fill="#302d65"/>
<polygon fill="#f4f4f6" points="5,5.5 17.4,5.5 24.5,9.6 24.5,19.5 5,19.5"/>
<polygon fill="#d0d0d8" points="17.4,5.5 24.5,9.6 18.5,9.6"/>
<rect x="1.4" y="19.3" width="26.5" height="10.4" fill="#a63333"/>
<rect x="5.4" y="21.2" width="18" height="0.9" fill="#c87a40"/>
<rect x="18.4" y="24.3" width="1.6" height="1.5" fill="#c8c8a8"/><rect x="22.2" y="24.3" width="1.6" height="1.5" fill="#c8c8a8"/>
</svg>
<svg class="a" style="left:556.95px;top:0;overflow:visible" width="30" height="34" viewBox="0 0 30 34"><rect x="0" y="16.6" width="28" height="5.4" fill="#33659b"/><rect x="0" y="22" width="28" height="4.8" fill="#3b6e6f"/><rect x="0" y="26.8" width="28" height="4.8" fill="#302d65"/><circle cx="13.6" cy="18.2" r="11.4" fill="none" stroke="#f4f4f4" stroke-width="2.4"/>
<circle cx="13.60" cy="9.90" r="0.8" fill="#f0f0f0"/>
<circle cx="17.75" cy="11.01" r="0.8" fill="#f0f0f0"/>
<circle cx="20.79" cy="14.05" r="0.8" fill="#f0f0f0"/>
<circle cx="21.90" cy="18.20" r="0.8" fill="#f0f0f0"/>
<circle cx="20.79" cy="22.35" r="0.8" fill="#f0f0f0"/>
<circle cx="6.41" cy="22.35" r="0.8" fill="#f0f0f0"/>
<circle cx="5.30" cy="18.20" r="0.8" fill="#f0f0f0"/>
<circle cx="6.41" cy="14.05" r="0.8" fill="#f0f0f0"/>
<circle cx="9.45" cy="11.01" r="0.8" fill="#f0f0f0"/>
<circle cx="9.5" cy="24.8" r="1.6" fill="none" stroke="#f0f0f0" stroke-width="0.9"/>
<circle cx="17.7" cy="24.8" r="1.6" fill="none" stroke="#f0f0f0" stroke-width="0.9"/>
<path d="M10.8,13.8 L14.6,17.4 L12.6,19.2 Z" fill="#cc1010"/><circle cx="13.6" cy="18.2" r="1.6" fill="#cc1010"/></svg>
<svg class="a" style="left:589.30px;top:0;overflow:visible" width="30" height="34" viewBox="0 0 30 34"><rect x="0" y="16.6" width="28" height="5.4" fill="#33659b"/><rect x="0" y="22" width="28" height="4.8" fill="#3b6e6f"/><rect x="0" y="26.8" width="28" height="4.8" fill="#302d65"/>
<polygon fill="#0b3434" points="15.2,3.6 28.7,3.6 28.7,17 12,32.5 -0.1,32.5 -0.1,19.5"/>
<clipPath id="c18"><circle cx="13.9" cy="17.4" r="12.6"/></clipPath>
<circle cx="13.9" cy="17.4" r="12.6" fill="#f0f0f0"/>
<g clip-path="url(#c18)" stroke="#2a2a6a" stroke-width="1.1">
<path d="M-6,8 L14,36 M-3,5 L17,33 M0,2 L20,30 M3,-1 L23,27 M6,-4 L26,24 M9,-7 L29,21 M12,-10 L32,18 M-9,11 L11,39"/>
</g>
<circle cx="13.2" cy="8.6" r="2" fill="#1a1a1a"/>
<path d="M4.1,12.7 H23.7" stroke="#1a1a1a" stroke-width="1.7"/>
<path d="M13.3,11 V19 L9.7,27.3 M13.3,19 L17.1,27.3" stroke="#1a1a1a" stroke-width="2.2" fill="none"/>
</svg>
<svg class="a" style="left:621.65px;top:0;overflow:visible" width="30" height="34" viewBox="0 0 30 34"><rect x="0" y="16.6" width="28" height="5.4" fill="#33659b"/><rect x="0" y="22" width="28" height="4.8" fill="#3b6e6f"/><rect x="0" y="26.8" width="28" height="4.8" fill="#302d65"/>
<polygon fill="#e8e8ea" points="2,17 8.5,8 13,12 7,24"/>
<polygon fill="#e8e8ea" points="20,10 26.2,20.8 21,28 17,18"/>
<rect x="6.3" y="6.6" width="14.7" height="23.1" fill="#f2f2f2"/>
<polygon fill="#e8e8e8" points="6.3,6.6 9,4.5 12,6 15,4.2 18.5,6 21,5 21,6.6"/>
<rect x="7.9" y="11.8" width="13" height="1.3" fill="#202040"/>
<rect x="10.6" y="14.9" width="6.5" height="1.4" fill="#333373"/>
<rect x="8.5" y="18" width="9" height="0.7" fill="#b0b0b0"/><rect x="8.5" y="20.3" width="7" height="0.7" fill="#b8b8b8"/>
<circle cx="16.3" cy="24.7" r="3.2" fill="#787878"/>
<circle cx="16.6" cy="25.6" r="0.8" fill="#c03030"/>
</svg>
<svg class="a" style="left:654.00px;top:0;overflow:visible" width="30" height="34" viewBox="0 0 30 34"><rect x="0" y="16.6" width="28" height="5.4" fill="#33659b"/><rect x="0" y="22" width="28" height="4.8" fill="#3b6e6f"/><rect x="0" y="26.8" width="28" height="4.8" fill="#302d65"/>
<polygon fill="#dddddd" points="10.83,10.55 11.22,7.82 14.48,7.82 14.87,10.55 17.04,11.45 19.25,9.80 21.55,12.10 19.90,14.31 20.80,16.48 23.53,16.87 23.53,20.13 20.80,20.52 19.90,22.69 21.55,24.90 19.25,27.20 17.04,25.55 14.87,26.45 14.48,29.18 11.22,29.18 10.83,26.45 8.66,25.55 6.45,27.20 4.15,24.90 5.80,22.69 4.90,20.52 2.17,20.13 2.17,16.87 4.90,16.48 5.80,14.31 4.15,12.10 6.45,9.80 8.66,11.45"/>
<circle cx="12.85" cy="18.5" r="8.3" fill="#dddddd"/>
<circle cx="12.85" cy="18.5" r="4.6" fill="#34407a"/>
<circle cx="12.85" cy="18.5" r="2.9" fill="#d4d4d4"/>
</svg>
<svg class="a" style="left:686.35px;top:0;overflow:visible" width="30" height="34" viewBox="0 0 30 34"><rect x="0" y="16.6" width="28" height="5.4" fill="#33659b"/><rect x="0" y="22" width="28" height="4.8" fill="#3b6e6f"/><rect x="0" y="26.8" width="28" height="4.8" fill="#302d65"/>
<g fill="none" stroke="#d8d21e" stroke-width="2">
<rect x="3.3" y="10.1" width="21.6" height="13.6"/>
<path d="M3.8,10.6 L13.8,18.6 L24.4,10.6"/>
<path d="M4,23 L10.8,16.2 M24.2,23 L17.2,16.2"/>
</g>
</svg>
<svg class="a" style="left:718.70px;top:0;overflow:visible" width="30" height="34" viewBox="0 0 30 34"><rect x="0" y="16.6" width="28" height="5.4" fill="#33659b"/><rect x="0" y="22" width="28" height="4.8" fill="#3b6e6f"/><rect x="0" y="26.8" width="28" height="4.8" fill="#302d65"/>
<path d="M8.7,13.4 C8.7,10.6 10.9,9.5 13.5,9.5 C16.3,9.5 18,11 18,13.1 C18,15.4 16,16.4 14.3,17.5 C12.8,18.5 12.3,19.6 12.3,21.2 V23.8" stroke="#f4f4f4" stroke-width="2.7" fill="none"/>
<circle cx="12.4" cy="27.3" r="1.7" fill="#f4f4f4"/>
</svg>
<svg class="a" style="left:751.05px;top:0;overflow:visible" width="30" height="34" viewBox="0 0 30 34"><rect x="0" y="16.6" width="28" height="5.4" fill="#33659b"/><rect x="0" y="22" width="28" height="4.8" fill="#3b6e6f"/><rect x="0" y="26.8" width="28" height="4.8" fill="#302d65"/>
<path d="M9.6,11 A8.4,8.4 0 1 0 18,11" fill="none" stroke="#dadada" stroke-width="3"/>
<rect x="12.6" y="6.4" width="2.7" height="8.5" rx="1.3" fill="#dadada"/>
</svg>
<div class="a" style="left:780px;top:3.5px;color:#fff;font-weight:bold;line-height:15px;white-space:nowrap;letter-spacing:-0.25px">SuperAdmin</div>
<div class="a" style="left:780px;top:18px;color:#fff;line-height:15px;white-space:nowrap;text-decoration:underline;letter-spacing:-0.2px">Superadmin</div>
<svg class="a" style="left:0;top:0" width="832" height="555"><polygon fill="#ffff00" points="198,119.5 244.5,103.5 244.5,113.8 338.3,113.8 338.3,125 244.5,125 244.5,135.5"/></svg></body></html>
